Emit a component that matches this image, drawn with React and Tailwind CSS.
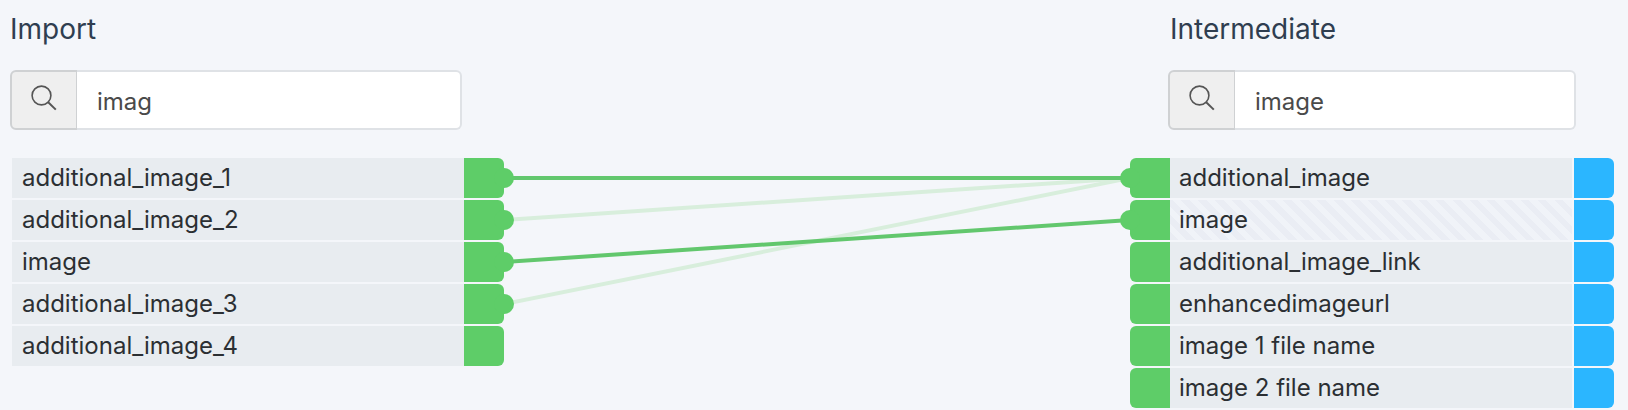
import { useState } from 'react';

const importFields = [
  { name: 'additional_image_1', linked: true },
  { name: 'additional_image_2', linked: true },
  { name: 'image', linked: true },
  { name: 'additional_image_3', linked: true },
  { name: 'additional_image_4' },
];

const intermediateFields = [
  { name: 'additional_image', linked: true },
  { name: 'image', linked: true, striped: true },
  { name: 'additional_image_link' },
  { name: 'enhancedimageurl' },
  { name: 'image 1 file name' },
  { name: 'image 2 file name' },
];

// from / to are row indexes in the two lists
const connections = [
  { from: 1, to: 0, faint: true },
  { from: 3, to: 0, faint: true },
  { from: 0, to: 0 },
  { from: 2, to: 1 },
];

// 40px row + 2px gap
const rowCenter = (index) => index * 42 + 20;

function SearchBox({ id, label, initial }) {
  const [value, setValue] = useState(initial);

  return (
    <div className="flex h-[60px]">
      <label
        htmlFor={id}
        aria-label={label}
        className="flex w-[67px] shrink-0 items-center justify-center rounded-l-md border-2 border-r border-[#cfd1d3] bg-[#efefef]"
      >
        <svg viewBox="0 0 26 26" className="mb-1 size-[26px]" fill="none" stroke="#555" strokeWidth="1.6">
          <circle cx="10.5" cy="10.5" r="9.4" />
          <path d="M17.2 17.2l7.6 7.4" strokeWidth="2" />
        </svg>
      </label>
      <input
        id={id}
        type="text"
        value={value}
        onChange={(e) => setValue(e.target.value)}
        className="w-full min-w-0 rounded-r-md border-2 border-l-0 border-[#dfe2e6] bg-white px-5 pt-1 text-2xl text-[#4a4a4a] outline-none"
      />
    </div>
  );
}

function Port({ side, linked }) {
  return (
    <span className={`relative w-10 shrink-0 bg-[#5ecd68] ${side === 'right' ? 'rounded-r-md' : 'rounded-l-md'}`}>
      {linked && (
        <span
          className={`absolute top-[10px] z-10 size-5 rounded-full bg-[#5ecd68] ${
            side === 'right' ? '-right-[10px]' : '-left-[10px]'
          }`}
        />
      )}
    </span>
  );
}

export default function App() {
  return (
    <main className="flex min-h-screen bg-[#f4f6fa] pl-[10px] pr-[14px] font-['Inter','Liberation_Sans',sans-serif]">
      {/* Import */}
      <section className="w-[494px] shrink-0">
        <h2 className="pt-[9px] text-[28px] leading-10 text-[#2f3e50]">Import</h2>
        <div className="mt-[21px] mr-[42px]">
          <SearchBox id="import-search" label="Search import fields" initial="imag" />
        </div>
        <ul className="mt-7 ml-0.5 flex flex-col gap-0.5">
          {importFields.map((field) => (
            <li key={field.name} className="flex h-10">
              <span className="flex-1 bg-[#e8ecf0] pl-[10px] text-2xl leading-10 text-[#2b2f33]">{field.name}</span>
              <Port side="right" linked={field.linked} />
            </li>
          ))}
        </ul>
      </section>

      {/* Connections */}
      <svg
        className="mt-[158px] h-[250px] min-w-0 flex-1"
        viewBox="0 0 100 250"
        preserveAspectRatio="none"
        aria-hidden="true"
      >
        {connections.map(({ from, to, faint }) => (
          <line
            key={`${from}-${to}`}
            x1="0"
            y1={rowCenter(from)}
            x2="100"
            y2={rowCenter(to)}
            stroke={faint ? '#d8eedc' : '#62c76d'}
            strokeWidth="4"
            vectorEffect="non-scaling-stroke"
          />
        ))}
      </svg>

      {/* Intermediate */}
      <section className="w-[484px] shrink-0">
        <h2 className="pt-[9px] pl-10 text-[28px] leading-10 text-[#2f3e50]">Intermediate</h2>
        <div className="mt-[21px] mx-[38px]">
          <SearchBox id="intermediate-search" label="Search intermediate fields" initial="image" />
        </div>
        <ul className="mt-7 flex flex-col gap-0.5">
          {intermediateFields.map((field) => (
            <li key={field.name} className="flex h-10">
              <Port side="left" linked={field.linked} />
              <span
                className={`mr-0.5 flex-1 pl-[9px] text-2xl leading-10 text-[#2b2f33] ${
                  field.striped
                    ? 'bg-[repeating-linear-gradient(45deg,#eaedf4_0px,#eaedf4_6px,#f0f3f8_6px,#f0f3f8_12px)]'
                    : 'bg-[#e8ecf0]'
                }`}
              >
                {field.name}
              </span>
              <span className="w-10 shrink-0 rounded-r-md bg-[#2bb6ff]" />
            </li>
          ))}
        </ul>
      </section>
    </main>
  );
}
